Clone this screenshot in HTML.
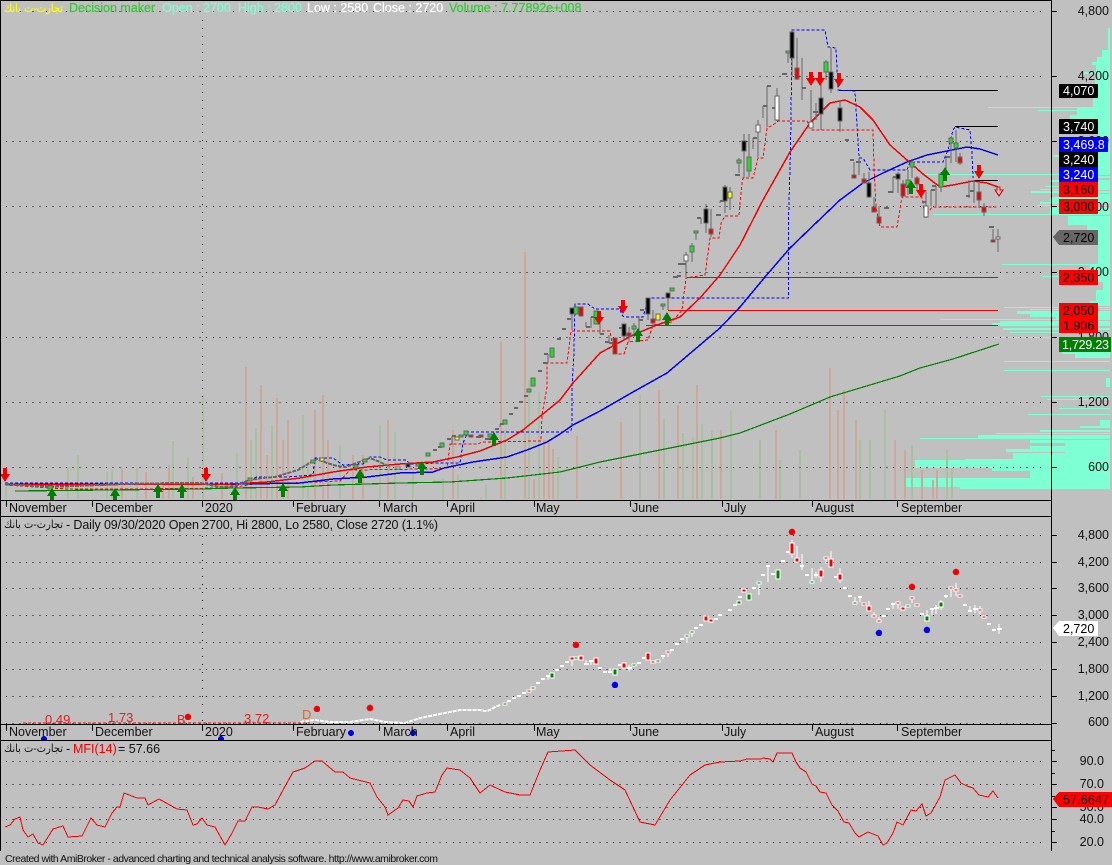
<!DOCTYPE html>
<html><head><meta charset="utf-8"><title>AmiBroker chart</title>
<style>
html,body{margin:0;padding:0;background:#c0c0c0;width:1112px;height:865px;overflow:hidden}
svg{display:block}
text{font-family:"Liberation Sans","DejaVu Sans",sans-serif;font-size:12.5px;fill:#111}
.ar{font-family:"DejaVu Sans","Liberation Sans",sans-serif;font-size:11px}
.h{stroke-width:.25px}
</style></head><body>
<svg width="1112" height="865" viewBox="0 0 1112 865" xmlns="http://www.w3.org/2000/svg">
<defs>
<path id="dn" d="M-2 0h4v6h3l-5 8-5-8h3z"/>
<path id="up" d="M-2 14h4v-6h3l-5-8-5 8h3z"/>
</defs>
<rect width="1112" height="865" fill="#c0c0c0"/>
<g shape-rendering="crispEdges">
<!-- volume profile -->
<path fill="#7fffd4" d="M1108 28H1110V50H1108ZM1102 50H1110V57H1102ZM1097 57H1110V62H1097ZM1092 62H1110V65H1092ZM1096 65H1110V72H1096ZM1083 72H1110V74H1083ZM1098 74H1110V78H1098ZM1095 78H1110V98H1095ZM1093 98H1110V107H1093ZM988 107H1110V108H988ZM1077 108H1110V110H1077ZM1038 110H1110V111H1038ZM1077 111H1110V115H1077ZM1070 115H1110V119H1070ZM1098 119H1110V155H1098ZM1053 155H1110V157H1053ZM1098 157H1110V174H1098ZM925 174H1110V175H925ZM1060 176H1110V178H1060ZM1050 180H1110V182H1050ZM1059 182H1110V186H1059ZM1045 186H1110V187H1045ZM1059 187H1110V189H1059ZM1040 189H1110V190H1040ZM1031 191H1110V193H1031ZM1059 194H1110V197H1059ZM1050 197H1110V202H1050ZM1040 202H1110V204H1040ZM1037 205H1110V206H1037ZM1050 207H1110V214H1050ZM933 214H1110V215H933ZM1068 216H1110V225H1068ZM1087 225H1110V240H1087ZM1098 240H1110V264H1098ZM1002 264H1110V265H1002ZM1090 265H1110V276H1090ZM1042 276H1110V277H1042ZM1096 277H1110V282H1096ZM1103 282H1110V290H1103ZM1096 290H1110V301H1096ZM1090 301H1110V304H1090ZM1058 304H1110V306H1058ZM1004 307H1110V308H1004ZM1030 309H1110V310H1030ZM1017 311H1110V314H1017ZM1030 314H1110V317H1030ZM1056 317H1110V319H1056ZM940 319H1110V320H940ZM1000 321H1110V323H1000ZM992 323H1110V325H992ZM1000 325H1110V326H1000ZM1003 328H1110V330H1003ZM1010 332H1110V333H1010ZM993 337H1110V338H993ZM1062 352H1110V354H1062ZM1075 354H1110V358H1075ZM1004 361H1110V362H1004ZM1004 370H1110V371H1004ZM1106 378H1110V387H1106ZM1041 396H1110V397H1041ZM1047 399H1110V400H1047ZM1059 408H1110V409H1059ZM1028 414H1110V415H1028ZM1100 420H1110V426H1100ZM1080 426H1110V428H1080ZM1040 430H1110V432H1040ZM996 433H1110V434H996ZM978 435H1110V438H978ZM920 438H1110V439H920ZM1030 440H1110V443H1030ZM1065 443H1110V446H1065ZM1030 446H1110V449H1030ZM1006 449H1110V452H1006ZM1065 452H1110V453H1065ZM1013 453H1110V459H1013ZM965 459H1110V460H965ZM915 460H1110V468H915ZM992 468H1110V471H992ZM1030 471H1110V478H1030ZM905 478H1110V487H905ZM960 487H1110V489H960Z"/>
<!-- volume bars -->
<path fill="none" stroke="#a9c19f" stroke-width="2" d="M6 499V487M68 499V468M78 499V455M107 499V472M112 499V470M137 499V468M173 499V441M188 499V457M203 499V395M237 499V453M251 499V440M256 499V428M272 499V425M303 499V415M308 499V462M340 499V445M380 499V425M395 499V432M413 499V470M443 499V479M458 499V474M486 499V485M505 499V430M529 499V380M539 499V392M558 499V457M640 499V395M664 499V419M683 499V433M693 499V437M702 499V424M712 499V431M731 499V411M780 499V460M760 499V440M800 499V450M860 499V440M870 499V440M885 499V410M912 499V445M947 499V450M952 499V468"/>
<path fill="none" stroke="#cfa798" stroke-width="2" d="M122 499V468M146 499V472M163 499V482M169 499V465M193 499V477M222 499V473M246 499V367M261 499V385M267 499V455M277 499V398M283 499V440M288 499V420M315 499V410M323 499V395M328 499V440M353 499V455M363 499V455M388 499V420M453 499V430M481 499V498M501 499V342M525 499V252M534 499V479M544 499V440M549 499V440M553 499V449M577 499V436M621 499V422M659 499V390M678 499V405M697 499V385M721 499V430M776 499V430M830 499V368M838 499V410M844 499V390M856 499V420M895 499V440M905 499V450M922 499V470M933 499V480M937 499V470"/>
<!-- dotted grid -->
<g fill="none" stroke="#000" stroke-dasharray="1 5.67">
<path d="M6 11.5H1046M6 76.5H1046M6 141.5H1046M6 206.5H1046M6 272.5H1046M6 337.5H1046M6 402.5H1046M6 467.5H1046"/>
<path d="M6 535.5H1046M6 562.5H1046M6 588.5H1046M6 615.5H1046M6 642.5H1046M6 669.5H1046M6 696.5H1046M6 723.5H1046"/>
<path d="M6 761.5H1046M6 784.5H1046M6 807.5H1046M6 819.5H1046M6 842.5H1046"/>
<path stroke-dasharray="1 7" d="M202.5 20V500M202.5 520V724"/>
</g>
<!-- level lines -->
<path fill="none" stroke="#000" d="M839 90.5H998M955 126.5H998M974 180.5H998"/>
<path fill="none" stroke="#f00000" d="M687 277.5H998M668 310.5H998M646 325.5H998"/>
<!-- dashed stops -->
<polyline fill="none" stroke="#0000ff" stroke-dasharray="3 2" points="5,483 240,483 257,477 287,477 313,475 315,458 333,458 343,465 363,464 370,457 380,457 387,460 407,460 409,464 440,463 460,463 463,443 468,432 570,432 572,428 572,387 574,352 575,304 588,304 595,309 620,309 622,315 624,317 643,317 646,307 648,298 787,298 788.5,298 788.5,220 790.5,150 791.5,80 792,30 825,30 828,47 836,48 838,90 855,91 859,158 863,158 870,170 907,170 910,162 943,162 948,150 953,130 955,127 970,130 972,153 973,178"/>
<polyline fill="none" stroke="#ff0000" stroke-dasharray="3 2" points="5,485 50,488 70,489 130,489 230,488 260,483 290,483 340,481 350,470 430,469 447,468 450,444 478,444 482,442 541,441 542,415 547,387 547,363 567,363 569,347 571,331 610,331 612,343 615,354 624,354 628,342 648,340 653,325 672,322 682,310 686,278 705,275 707,260 710,238 719,238 721,223 725,216 739,216 742,183 743,178 753,178 758,158 763,158 767,128 773,125 778,121 807,121 812,130 873,130 874,167 876,207 880,227 897,227 902,197 922,197 925,217 932,207 998,207"/>
<!-- moving averages -->
<polyline fill="none" stroke="#008000" stroke-width="1.2" points="15,491 200,489 233,488 300,487 333,485 367,484 400,483 450,482 507,478 560,472 600,462 650,452 700,442 720,438 740,433 790,414 830,397 900,376 920,368 953,359 999,344"/>
<polyline fill="none" stroke="#0000f0" stroke-width="1.5" points="5,484 240,484 300,483 333,479 367,477 400,473 433,472 444,468 473,462 507,457 527,450 547,442 560,434 573,425 600,411 633,392 667,373 700,345 720,328 740,307 765,277 790,248 817,222 840,200 863,183 883,173 907,162 927,155 947,151 967,147 980,149 998,155"/>
<polyline fill="none" stroke="#f00000" stroke-width="1.5" points="5,485 233,484 267,482 300,478 333,472 367,467 400,464 433,462 457,457 480,451 507,440 523,430 543,414 560,400 573,383 600,353 613,346 633,335 657,325 680,317 700,298 720,275 740,245 763,200 790,152 810,123 830,103 845,100 860,107 873,120 890,145 907,160 923,174 940,187 953,185 973,181 987,183 998,187"/>
<!-- left low candles -->
<polyline fill="none" stroke="#666" stroke-width="2" stroke-dasharray="4 1" points="5,484 50,487 100,485 125,484 175,483 200,483 220,487 235,486 250,480 262,478 275,477 298,470 308,464 317,459 327,463 337,466 346,467 370,458 380,462 390,467"/>
<!-- candles pane 1 -->
<path fill="none" stroke="#666" d="M788 52V63M792 30V77M797 38V80M802 58V100M811 90V128M816 103V120M821 80V130M826 60V80M831 48V93M840 100V132M854 162V178M859 158V175M864 173V183M869 172V198M874 197V212M879 206V224M893 177V193M898 172V193M903 180V197M908 170V195M912 160V178M917 176V190M926 190V218M931 190V206M936 186V206M941 172V192M946 157V172M951 138V163M956 130V162M960 153V165M969 180V198M974 180V203M979 183V208M984 203V216M993 229V242M998 229V252M686 252V277M692 243V262M696 231V240M701 218V224M706 204V233M711 209V237M720 201V203M725 185V213M730 187V210M739 158V173M744 134V178M749 134V177M753 138V149M758 120V158M763 106V118M767 86V127M777 88V121M572 308V330M586 322V327M591 317V328M600 323V334M609 335V343M624 324V340M629 327V342M634 323V337M639 316V333M648 298V320M653 310V327M658 314V320M663 304V310M668 293V310M552 350V358M548 354V363M500 424V427M452 436V445"/>
<path fill="none" stroke="#666" stroke-width="2" d="M802 88h4M813 112h5M782 74h5M845 140h4M850 160h4M856 162h5M884 208h5M888 192h5M893 177h5M970 196h-4M974 191h-4M922 202h4M931 190h4M936 186h-4M946 157h4M989 227h5M673 277h5M678 264h5M701 218h-4M716 215h5M720 201h5M735 175h5M753 138h4M763 106h4M767 86h4M772 108h4M509 414h4M514 408h4M519 402h4M524 396h4M538 371h4M543 363h4M548 354h-4M557 339h4M562 329h4M567 319h4M586 327h4M591 317h4M600 334h4M605 342h4M609 343h4M619 328h4M639 320h4M644 310h-4M677 276h4M682 264h4M447 439h4M452 436h4M476 437h5M485 439h5M495 429h4M500 424h4M433 450h4M438 447h4"/>
<g stroke="#666">
<g fill="#000"><rect x="790" y="32" width="4" height="26"/><rect x="819" y="98" width="4" height="16"/><rect x="829" y="72" width="4" height="17"/><rect x="838" y="108" width="4" height="13"/><rect x="867" y="183" width="4" height="14"/><rect x="896" y="174" width="4" height="5"/><rect x="704" y="209" width="4" height="14"/><rect x="723" y="187" width="4" height="14"/><rect x="742" y="141" width="4" height="10"/><rect x="570" y="308" width="4" height="6"/><rect x="622" y="324" width="4" height="12"/><rect x="646" y="298" width="4" height="16"/><rect x="666" y="293" width="4" height="5"/><rect x="406" y="464" width="4" height="3"/></g>
<g fill="#f00000"><rect x="795" y="68" width="4" height="11"/><rect x="852" y="175" width="4" height="3"/><rect x="862" y="179" width="4" height="4"/><rect x="872" y="207" width="4" height="5"/><rect x="877" y="217" width="4" height="6"/><rect x="901" y="184" width="4" height="12"/><rect x="915" y="178" width="4" height="6"/><rect x="958" y="157" width="4" height="6"/><rect x="977" y="192" width="4" height="8"/><rect x="982" y="207" width="4" height="5"/><rect x="991" y="240" width="4" height="2"/><rect x="709" y="229" width="4" height="5"/><rect x="579" y="307" width="4" height="9"/><rect x="613" y="338" width="4" height="16"/><rect x="627" y="333" width="4" height="3"/><rect x="651" y="319" width="4" height="4"/><rect x="469" y="435" width="4" height="2"/><rect x="479" y="435" width="4" height="2"/></g>
<g fill="#fff"><rect x="809" y="122" width="4" height="6"/><rect x="775" y="96" width="4" height="24"/><rect x="924" y="206" width="4" height="11"/><rect x="996" y="237" width="4" height="2"/><rect x="684" y="255" width="4" height="6"/><rect x="756" y="125" width="4" height="7"/><rect x="396" y="467" width="4" height="2"/></g>
<g fill="#22e022"><rect x="786" y="51" width="4" height="2"/><rect x="824" y="62" width="4" height="10"/><rect x="906" y="180" width="4" height="7"/><rect x="910" y="162" width="4" height="5"/><rect x="939" y="174" width="4" height="13"/><rect x="949" y="138" width="4" height="5"/><rect x="954" y="143" width="4" height="5"/><rect x="690" y="246" width="4" height="6"/><rect x="694" y="231" width="4" height="2"/><rect x="737" y="160" width="4" height="3"/><rect x="747" y="157" width="4" height="14"/><rect x="574" y="307" width="4" height="7"/><rect x="594" y="311" width="4" height="13"/><rect x="632" y="326" width="4" height="3"/><rect x="661" y="304" width="4" height="2"/><rect x="670" y="288" width="4" height="3"/><rect x="550" y="348" width="4" height="9"/><rect x="531" y="378" width="4" height="8"/><rect x="527" y="389" width="4" height="3"/><rect x="503" y="420" width="4" height="4"/><rect x="440" y="443" width="4" height="4"/><rect x="459" y="435" width="4" height="2"/><rect x="464" y="431" width="4" height="4"/><rect x="488" y="434" width="4" height="3"/><rect x="426" y="453" width="4" height="3"/><rect x="416" y="464" width="4" height="2"/><rect x="363" y="459" width="4" height="3"/><rect x="354" y="465" width="4" height="3"/><rect x="311" y="460" width="4" height="3"/><rect x="248" y="478" width="4" height="3"/><rect x="48" y="486" width="4" height="3"/></g>
<g fill="#ffff00"><rect x="728" y="192" width="4" height="6"/><rect x="656" y="314" width="4" height="6"/><rect x="455" y="437" width="4" height="3"/><rect x="320" y="458" width="4" height="3"/></g>
</g>
<!-- arrows -->
<g fill="#f00000"><use href="#dn" x="5" y="468"/><use href="#dn" x="206" y="468"/><use href="#dn" x="811" y="72"/><use href="#dn" x="820" y="72"/><use href="#dn" x="839" y="73"/><use href="#dn" x="979" y="165"/><use href="#dn" x="921" y="184"/><use href="#dn" x="599" y="311"/><use href="#dn" x="623" y="300"/></g>
<path fill="none" stroke="#f00000" d="M995 190h2v-3h3v3h3l-4 6z"/>
<g fill="#008000"><use href="#up" x="52" y="488"/><use href="#up" x="115" y="488"/><use href="#up" x="158" y="484"/><use href="#up" x="182" y="484"/><use href="#up" x="235" y="487"/><use href="#up" x="283" y="483"/><use href="#up" x="360" y="469"/><use href="#up" x="422" y="461"/><use href="#up" x="494" y="432"/><use href="#up" x="638" y="328"/><use href="#up" x="667" y="312"/><use href="#up" x="911" y="180"/><use href="#up" x="945" y="167"/></g>
<!-- pane 2 -->
<polyline fill="none" stroke="#fff" stroke-width="2" stroke-dasharray="4 1" points="300,722 315,720 330,722 350,722 370,719 385,722 405,723 420,718 440,714 450,712 460,710 480,710 485,711 490,710 495,707 500,705"/>
<path fill="none" stroke="#fff" d="M548 676V680M572 659V666M591 661V665M586 660V665M610 668V672M629 665V671M663 656V659M668 652V657M687 636V643M692 632V637M759 583V595M768 566V582M802 554V570M797 546V562M792 540V558M812 568V583M816 572V578M821 567V582M826 558V564M831 551V568M840 568V583M855 597V604M860 597V602M869 601V611M874 612V616M879 617V621M893 604V609M898 601V609M912 598V603M927 610V621M932 609V615M936 605V614M941 600V610M946 596V598M951 588V597M956 583V596M970 606V611M975 605V613M980 606V615M994 629V631M999 624V634"/>
<path fill="none" stroke="#fff" stroke-width="2" d="M507 701h4M512 698h4M517 696h4M522 693h4M536 683h4M541 679h4M546 676h4M555 670h4M560 666h4M565 662h4M584 664h5M589 661h4M598 668h4M603 672h4M608 672h4M618 665h4M627 668h5M637 663h4M642 658h4M661 656h4M670 650h4M675 644h4M680 639h4M694 628h4M699 625h4M714 619h4M718 615h4M728 610h4M733 605h4M738 597h4M752 588h4M761 575h4M766 566h4M771 574h4M781 561h4M786 552h4M800 566h4M805 575h4M814 575h4M834 577h4M843 588h4M848 596h4M858 597h4M882 616h4M886 609h4M891 604h4M920 614h4M930 609h4M934 608h5M944 596h4M963 605h4M968 611h4M973 609h5M987 624h4M992 630h4M997 629h5"/>
<g stroke="#fff">
<g fill="#008000"><rect x="503" y="703" width="4" height="2"/><rect x="531" y="687" width="4" height="2"/><rect x="550" y="673" width="4" height="5"/><rect x="574" y="657" width="4" height="2"/><rect x="613" y="669" width="4" height="6"/><rect x="632" y="664" width="4" height="2"/><rect x="656" y="660" width="4" height="2"/><rect x="685" y="635" width="4" height="2"/><rect x="690" y="631" width="4" height="2"/><rect x="737" y="601" width="4" height="3"/><rect x="747" y="594" width="4" height="6"/><rect x="757" y="582" width="4" height="2"/><rect x="776" y="570" width="4" height="9"/><rect x="810" y="581" width="4" height="2"/><rect x="853" y="602" width="4" height="2"/><rect x="906" y="605" width="4" height="2"/><rect x="925" y="616" width="4" height="5"/><rect x="939" y="602" width="4" height="5"/></g>
<g fill="#f00000"><rect x="527" y="690" width="4" height="2"/><rect x="570" y="657" width="4" height="3"/><rect x="579" y="656" width="4" height="4"/><rect x="594" y="658" width="4" height="6"/><rect x="622" y="663" width="4" height="5"/><rect x="646" y="653" width="4" height="7"/><rect x="651" y="661" width="4" height="2"/><rect x="666" y="651" width="4" height="2"/><rect x="704" y="616" width="4" height="5"/><rect x="709" y="619" width="4" height="3"/><rect x="742" y="589" width="4" height="3"/><rect x="790" y="543" width="4" height="11"/><rect x="795" y="558" width="4" height="4"/><rect x="819" y="570" width="4" height="7"/><rect x="824" y="557" width="4" height="2"/><rect x="829" y="559" width="4" height="8"/><rect x="838" y="574" width="4" height="6"/><rect x="862" y="603" width="4" height="2"/><rect x="867" y="606" width="4" height="5"/><rect x="872" y="615" width="4" height="2"/><rect x="877" y="620" width="4" height="2"/><rect x="896" y="602" width="4" height="2"/><rect x="901" y="607" width="4" height="3"/><rect x="910" y="597" width="4" height="2"/><rect x="915" y="604" width="4" height="2"/><rect x="949" y="587" width="4" height="2"/><rect x="954" y="589" width="4" height="2"/><rect x="958" y="595" width="4" height="2"/><rect x="978" y="609" width="4" height="2"/><rect x="982" y="616" width="4" height="2"/></g>
</g>
<!-- pane 2 diamonds -->
<g fill="#f00000"><circle cx="792" cy="532" r="3.3"/><circle cx="912" cy="587" r="3.3"/><circle cx="956" cy="572" r="3.3"/><circle cx="576" cy="645" r="3.3"/><circle cx="188" cy="717" r="3.3"/><circle cx="317" cy="709" r="3.3"/><circle cx="370" cy="708" r="3.3"/></g>
<path fill="none" stroke="#f00000" stroke-dasharray="3 2" d="M23 723H310"/>
</g>
<g><text x="45" y="724" style="fill:#e02020;font-size:13px">0.49</text><text x="108" y="722" style="fill:#e02020;font-size:13px">1.73</text><text x="177" y="724" style="fill:#e02020">B</text><text x="244" y="723" style="fill:#e02020;font-size:13px">3.72</text><text x="302" y="719" style="fill:#e0692a;font-size:13px">D</text></g>
<g shape-rendering="crispEdges">
<g fill="#0000f0"><circle cx="879" cy="633" r="3.3"/><circle cx="927" cy="630" r="3.3"/><circle cx="615" cy="685" r="3.3"/><circle cx="351" cy="733" r="3"/><circle cx="413" cy="733" r="3"/><circle cx="221" cy="739" r="3"/><circle cx="44" cy="739" r="3"/></g>
<!-- MFI -->
<rect x="1" y="741" width="1050" height="3" fill="#c0c0c0"/>
<polyline fill="none" stroke="#f00000" points="5,827 10,825 15,819 20,817 23,830 28,837 33,834 38,843 43,845 53,829 63,826 68,837 82,836 91,818 97,825 105,827 112,813 117,807 120,807 124,793 137,798 145,798 148,805 159,799 168,804 177,809 187,810 193,825 197,824 202,818 207,825 215,827 225,845 232,833 238,821 245,821 252,807 258,807 268,809 275,805 283,790 293,772 305,768 315,761 322,761 335,772 343,772 350,778 370,783 377,797 385,807 388,815 398,808 403,800 409,801 413,807 417,796 427,793 435,792 442,775 447,768 460,770 470,778 480,793 490,785 505,792 520,795 530,795 540,770 548,752 575,750 590,765 610,780 625,790 640,822 655,825 670,800 690,775 705,765 720,762 740,761 747,759 761,759 763,758 770,759 773,762 777,753 792,753 796,762 800,768 806,772 812,784 816,786 820,792 826,793 832,805 838,811 844,822 849,823 855,833 859,837 868,832 878,836 883,845 887,843 893,833 897,822 903,825 911,810 916,811 922,804 926,816 931,813 940,797 945,780 955,775 961,783 967,786 973,788 979,795 988,797 993,791 998,798"/>
<!-- strips -->
<rect x="1" y="501" width="1050" height="15" fill="#c0c0c0"/>
<!-- frame -->
<path fill="none" stroke="#000" d="M0.5 0V851M0 0.5H1051M1051.5 0V851M0 500.5H1051M0 516.5H1051M0 724.5H1051M0 740.5H1051"/>
<path fill="none" stroke="#000" d="M6.5 501V507M92.5 501V507M202.5 501V507M293.5 501V507M379.5 501V507M447.5 501V507M534.5 501V507M630.5 501V507M722.5 501V507M812.5 501V507M897.5 501V507M6.5 725V731M92.5 725V731M202.5 725V731M293.5 725V731M379.5 725V731M447.5 725V731M534.5 725V731M630.5 725V731M722.5 725V731M812.5 725V731M897.5 725V731"/>
<path fill="none" stroke="#000" d="M1052 11.5h5M1052 76.5h5M1052 141.5h5M1052 206.5h5M1052 272.5h5M1052 337.5h5M1052 402.5h5M1052 467.5h5M1052 535.5h5M1052 562.5h5M1052 588.5h5M1052 615.5h5M1052 642.5h5M1052 669.5h5M1052 696.5h5M1052 723.5h5M1052 750.5h3M1052 761.5h5M1052 773.5h3M1052 784.5h5M1052 796.5h3M1052 807.5h5M1052 819.5h5M1052 831.5h3M1052 842.5h5"/>
</g>
<!-- header -->
<text class="ar h" x="4" y="12" style="fill:#ffff00;stroke:#ffff00" textLength="59" lengthAdjust="spacingAndGlyphs">تجارت-ت بانك</text>
<text class="h" x="69" y="12" style="fill:#32cd32;stroke:#32cd32">Decision maker</text>
<text class="h" x="162" y="12" style="fill:#7fffd4;stroke:#7fffd4">Open : 2700</text>
<text class="h" x="238" y="12" style="fill:#7fffd4;stroke:#7fffd4">High : 2800</text>
<text class="h" x="307" y="12" style="fill:#fff;stroke:#fff">Low : 2580</text>
<text class="h" x="373" y="12" style="fill:#fff;stroke:#fff">Close : 2720</text>
<text class="h" x="449" y="12" style="fill:#32cd32;stroke:#32cd32">Volume : 7.77892e+008</text>
<!-- month labels -->
<g>
<text x="9" y="512">November</text><text x="95" y="512">December</text><text x="205" y="512">2020</text><text x="296" y="512">February</text><text x="383" y="512">March</text><text x="450" y="512">April</text><text x="536" y="512">May</text><text x="632" y="512">June</text><text x="724" y="512">July</text><text x="815" y="512">August</text><text x="901" y="512">September</text>
<text x="9" y="736">November</text><text x="95" y="736">December</text><text x="205" y="736">2020</text><text x="296" y="736">February</text><text x="383" y="736">March</text><text x="450" y="736">April</text><text x="536" y="736">May</text><text x="632" y="736">June</text><text x="724" y="736">July</text><text x="815" y="736">August</text><text x="901" y="736">September</text>
</g>
<!-- pane titles -->
<text class="ar" x="4" y="528" textLength="59" lengthAdjust="spacingAndGlyphs">تجارت-ت بانك</text>
<text x="66" y="529" textLength="372">- Daily 09/30/2020 Open 2700, Hi 2800, Lo 2580, Close 2720 (1.1%)</text>
<text class="ar" x="4" y="752" textLength="59" lengthAdjust="spacingAndGlyphs">تجارت-ت بانك</text>
<text x="66" y="753">-</text><text x="73" y="753" style="fill:#f00000">MFI(14)</text><text x="118" y="753">= 57.66</text>
<text x="5" y="862" style="font-size:10.5px" textLength="433">Created with AmiBroker - advanced charting and technical analysis software. http://www.amibroker.com</text>
<!-- axis text -->
<g text-anchor="end">
<text x="1109" y="15">4,800</text><text x="1109" y="80">4,200</text><text x="1109" y="145">3,600</text><text x="1109" y="211">3,000</text><text x="1109" y="276">2,400</text><text x="1109" y="341">1,800</text><text x="1109" y="406">1,200</text><text x="1109" y="471">600</text>
<text x="1109" y="539">4,800</text><text x="1109" y="566">4,200</text><text x="1109" y="592">3,600</text><text x="1109" y="619">3,000</text><text x="1109" y="646">2,400</text><text x="1109" y="673">1,800</text><text x="1109" y="700">1,200</text><text x="1109" y="726">600</text>
<text x="1104" y="765">90.0</text><text x="1104" y="788">70.0</text><text x="1104" y="811">50.0</text><text x="1104" y="823">40.0</text><text x="1104" y="846">20.0</text>
</g>
<!-- axis boxes -->
<g shape-rendering="crispEdges">
<rect x="1059" y="84" width="39" height="14" fill="#000"/>
<rect x="1059" y="119" width="39" height="15" fill="#000"/>
<rect x="1059" y="137" width="49" height="15" fill="#0000ff"/>
<rect x="1059" y="152" width="39" height="15" fill="#000"/>
<rect x="1059" y="167" width="39" height="15" fill="#0000ff"/>
<rect x="1059" y="182" width="39" height="15" fill="#ff0000"/>
<rect x="1059" y="199" width="39" height="15" fill="#ff0000"/>
<polygon points="1053,237 1059,230 1098,230 1098,245 1059,245" fill="#666"/>
<rect x="1059" y="270" width="39" height="15" fill="#ff0000"/>
<rect x="1059" y="303" width="39" height="30" fill="#ff0000"/>
<rect x="1059" y="337" width="52" height="15" fill="#008000"/>
<polygon points="1053,628 1059,621 1098,621 1098,636 1059,636" fill="#fff"/>
<polygon points="1053,799 1059,792 1112,792 1112,807 1059,807" fill="#ff0000"/>
</g>
<text x="1063" y="95" style="fill:#fff">4,070</text>
<text x="1063" y="131" style="fill:#fff">3,740</text>
<text x="1063" y="149" style="fill:#fff">3,469.8</text>
<text x="1063" y="164" style="fill:#fff">3,240</text>
<text x="1063" y="179" style="fill:#fff">3,240</text>
<text x="1063" y="194" style="fill:#000">3,160</text>
<text x="1063" y="211" style="fill:#000">3,000</text>
<text x="1063" y="242" style="fill:#000">2,720</text>
<text x="1063" y="282" style="fill:#000">2,350</text>
<text x="1063" y="315" style="fill:#000">2,050</text>
<text x="1063" y="330" style="fill:#000">1,906</text>
<text x="1062" y="349" style="fill:#fff" textLength="47">1,729.23</text>
<text x="1063" y="633" style="fill:#000">2,720</text>
<text x="1063" y="804" style="fill:#000" textLength="46">57.6647</text>
</svg>
</body></html>
